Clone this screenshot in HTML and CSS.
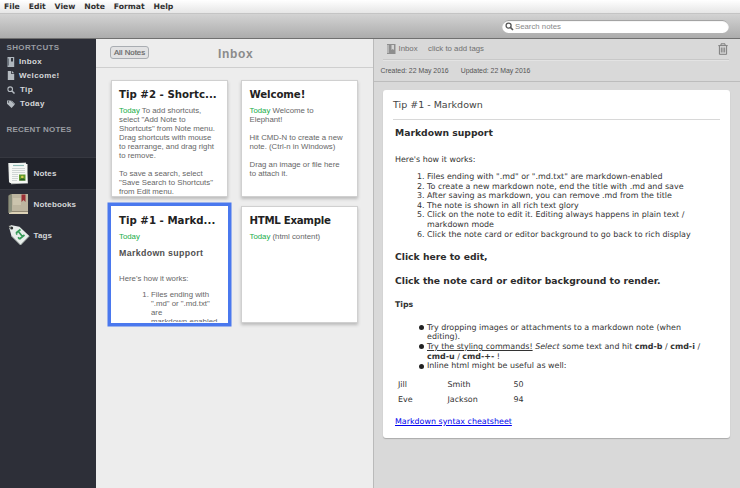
FILE: index.html
```html
<!DOCTYPE html>
<html lang="en">
<head>
<meta charset="utf-8">
<title>Elephant</title>
<link rel="stylesheet" href="styles.css">
</head>
<body>
<nav class="menubar"><span>File</span><span>Edit</span><span>View</span><span>Note</span><span>Format</span><span>Help</span></nav>
<header class="toolbar">
  <div class="search">
    <svg width="9" height="9" viewBox="0 0 9 9"><circle cx="3.6" cy="3.6" r="2.5" fill="none" stroke="#555" stroke-width="1.3"/><path d="M5.4 5.4 8 8" stroke="#555" stroke-width="1.6"/></svg>
    <span>Search notes</span>
  </div>
</header>
<main class="panes">
  <aside class="sidebar">
    <h2>SHORTCUTS</h2>
    <ul class="shortcuts">
      <li><svg width="8" height="10" viewBox="0 0 8 10"><path d="M.5 0h6.7v10H.5z" fill="#aeb6bd"/><path d="M.5 1.5h1.3v7H.5z" fill="#5d656e"/><path d="M4 1h2v4L5 4 4 5z" fill="#30343c"/></svg><span>Inbox</span></li>
      <li><svg width="8" height="9" viewBox="0 0 8 9"><path d="M.8 0h3.4v3h3v6H.8z" fill="#b5bbc1"/><path d="M5 0l2.2 2.3H5z" fill="#b5bbc1"/></svg><span>Welcome!</span></li>
      <li class="wide"><svg width="8" height="8" viewBox="0 0 8 8"><circle cx="3.2" cy="3.2" r="2.3" fill="none" stroke="#b5bbc1" stroke-width="1.1"/><path d="M5 5l2.5 2.5" stroke="#b5bbc1" stroke-width="1.5"/></svg><span>Tip</span></li>
      <li class="wide"><svg width="8" height="8" viewBox="0 0 8 8"><path d="M0 .5h3.5l4.3 4L4.6 8 0 3.8z" fill="#b5bbc1"/><path d="M4.6.7 8 4.2" stroke="#8d949b"/><circle cx="1.5" cy="1.9" r=".7" fill="#2d2f38"/></svg><span>Today</span></li>
    </ul>
    <h2 class="recent">RECENT NOTES</h2>
    <ul class="sections">
      <li class="active">
        <svg width="22" height="23" viewBox="0 0 22 23"><path d="M1 1.5 18 .5l2 21-17 .8z" fill="#b9bdbb"/><path d="M.3 1h17.5v19.5H1z" fill="#eef1ee"/><path d="M2 2h17.5v19H2z" fill="#f7f8f5"/><path d="M5 3.5h11" stroke="#8dbab4" stroke-width="1.2"/><path d="M4 6.5h13M4 8.5h13M4 10.5h13M4 12.5h6M4 14.5h6M4 16.5h6M4 18.500h5" stroke="#c5cbcb" stroke-width=".8"/><path d="M11 12.500h6.500v6H11z" fill="#5f982c"/><circle cx="14.300" cy="15" r="1.300" fill="#d5ce51"/><path d="M11 18.500l2-2h3l1.500 2z" fill="#285f25"/></svg>
        <span>Notes</span></li>
      <li>
        <svg width="22" height="22" viewBox="0 0 22 22"><path d="M.5 3 2 1h18v19H.5z" fill="#655b49"/><path d="M1 19h19v2H1z" fill="#ddd3b8"/><path d="M3.500 1H20v17.500H3.500z" fill="#bcb59f"/><path d="M.5 2.500 4 1v18l-3.500 1z" fill="#8b907d"/><path d="M5 5h8v7H5z" fill="#cbc4ad"/><path d="M13.500 1.500h4V9l-2-2-2 2z" fill="#9b3036"/></svg>
        <span>Notebooks</span></li>
      <li>
        <svg width="22" height="22" viewBox="0 0 22 22"><path d="M.7 2 2.500 1l9 1.800L21.300 12 12.500 21 3.500 12z" fill="#e8edeb"/><path d="M3.500 12l9 9 8.800-9" fill="none" stroke="#a8b2ac"/><circle cx="3.700" cy="4" r="1.500" fill="#2b302f"/><path d="M2 4C0 2 1 1 3 2" fill="none" stroke="#222" stroke-width=".8"/><path d="m8 9 4.500-3.500M10.200 7.300l4 5M11.500 15l5-4M8 9l1.200 1.500M11.500 15l-1.400-1.700" fill="none" stroke="#359b58" stroke-width="1.700"/></svg>
        <span>Tags</span></li>
    </ul>
  </aside>

  <section class="browser">
    <header class="browser-head"><button>All Notes</button><h1>Inbox</h1></header>
    <div class="cards">
      <article class="card"><h3 class="loose">Tip #2 - Shortc...</h3>
        <p><b>Today</b> To add shortcuts,<br>select "Add Note to<br>Shortcuts" from Note menu.<br>Drag shortcuts with mouse<br>to rearrange, and drag right<br>to remove.<br><br>To save a search, select<br>"Save Search to Shortcuts"<br>from Edit menu.</p></article>
      <article class="card"><h3>Welcome!</h3>
        <p><b>Today</b> Welcome to<br>Elephant!<br><br>Hit CMD-N to create a new<br>note. (Ctrl-n in Windows)<br><br>Drag an image or file here<br>to attach it.</p></article>
      <article class="card selected"><h3 class="loose">Tip #1 - Markd...</h3>
        <p><b>Today</b></p>
        <h4>Markdown support</h4>
        <p>Here's how it works:</p>
        <ol><li>Files ending with<br>".md" or ".md.txt"<br>are<br>markdown-enabled</li></ol></article>
      <article class="card"><h3 class="tight">HTML Example</h3>
        <p><b>Today</b> (html content)</p></article>
    </div>
  </section>

  <section class="editor">
    <div class="crumbs">
      <svg width="9" height="10" viewBox="0 0 9 10"><path d="M0 0h8.500v10H0z" fill="#8e8e8e"/><path d="M0 1h2v8H0z" fill="#b5b5b5"/><path d="M4.500 1H7v5L5.700 5 4.500 6z" fill="#d4d4d4"/></svg>
      <span class="notebook">Inbox</span><span>click to add tags</span>
      <svg class="trash" width="10" height="12" viewBox="0 0 10 12"><path d="M.3 2.600h9.400M3 2.300V.8h4v1.500M1.400 3v8.300h7.200V3M3.300 4.500v5M5 4.500v5M6.700 4.500v5" fill="none" stroke="#7e7e7e"/></svg>
    </div>
    <div class="dates"><span>Created: 22 May 2016</span><span>Updated: 22 May 2016</span></div>
    <article class="note">
      <h2>Tip #1 - Markdown</h2>
      <h3 class="first">Markdown support</h3>
      <p class="intro">Here's how it works:</p>
      <ol>
        <li>Files ending with ".md" or ".md.txt" are markdown-enabled</li>
        <li>To create a new markdown note, end the title with .md and save</li>
        <li>After saving as markdown, you can remove .md from the title</li>
        <li>The note is shown in all rich text glory</li>
        <li>Click on the note to edit it. Editing always happens in plain text /<br>markdown mode</li>
        <li>Click the note card or editor background to go back to rich display</li>
      </ol>
      <h3>Click here to edit,</h3>
      <h3>Click the note card or editor background to render.</h3>
      <h4>Tips</h4>
      <ul>
        <li>Try dropping images or attachments to a markdown note (when<br>editing).</li>
        <li><u>Try the styling commands!</u> <i>Select</i> some text and hit <b>cmd-b</b> / <b>cmd-i</b> /<br><b>cmd-u</b> / <b>cmd-+-</b> !</li>
        <li>Inline html might be useful as well:</li>
      </ul>
      <table>
        <tr><td>Jill</td><td>Smith</td><td>50</td></tr>
        <tr><td>Eve</td><td>Jackson</td><td>94</td></tr>
      </table>
      <a href="#">Markdown syntax cheatsheet</a>
    </article>
  </section>
</main>
</body>
</html>
```
FILE: styles.css
```css
* { box-sizing: border-box; margin: 0; padding: 0; }
body {
  width: 740px; height: 488px; overflow: hidden;
  display: flex; flex-direction: column;
  font: 7.8px/9.6px "DejaVu Sans", sans-serif; color: #333;
}
ul, ol { list-style: none; }
svg { flex: none; display: block; }

.menubar {
  height: 13px; padding-left: 4px; display: flex; gap: 8.9px;
  font-weight: bold; font-size: 7.7px; line-height: 13px; color: #303030;
  background: linear-gradient(#fff, #e6e6e6);
}
.toolbar {
  height: 26px; display: flex; justify-content: flex-end;
  padding: 6px 11px 0 0;
  background: linear-gradient(#d3d3d3, #acacac);
  border-top: 1px solid #c4c4c4; border-bottom: 1px solid #707070;
}
.search {
  width: 227px; height: 13px; padding: 0 3px; border-radius: 7px;
  display: flex; align-items: center; gap: 1px;
  background: #fff; box-shadow: inset 0 1px 1px #999;
  font: 7.8px "Liberation Sans", sans-serif; color: #888;
}
.panes { flex: 1; display: flex; min-height: 0; }

.sidebar {
  width: 96px; background: #2d2f38;
  font: bold 8px/14px "Liberation Sans", sans-serif; letter-spacing: .35px; color: #d6d8da;
}
.sidebar h2 { font-size: 8px; line-height: 10px; padding: 4px 0 0 6.5px; color: #9a9da3; }
.shortcuts { padding: 1.5px 0 0 7px; }
.shortcuts li { height: 14.2px; display: flex; align-items: center; gap: 4px; }
.shortcuts .wide { gap: 5px; }
.sidebar .recent { padding-top: 13.7px; letter-spacing: .2px; }
.sections { margin-top: 23px; letter-spacing: .15px; }
.sections li { height: 31px; padding-left: 8px; display: flex; align-items: center; gap: 3.5px; }
.sections span { padding-top: 1px; }
.sections .active { background: #22242c; box-shadow: 0 -1px #363840, 0 1px #363840; }

.browser { width: 277px; background: #ededed; }
.browser-head { height: 29px; display: flex; align-items: center; padding-left: 14px; border-bottom: 1px solid #cfcfcf; }
.browser-head button {
  width: 39px; height: 13px; margin-top: -1px; border: 1px solid #a9adb2; border-radius: 3px; background: #e2e2e3;
  font: 7.8px/10px "Liberation Sans", sans-serif; color: #666; -webkit-text-stroke: .2px #666;
}
.browser-head h1 { margin: 2px 0 0 69px; font: bold 12px "Liberation Sans", sans-serif; letter-spacing: .7px; color: #8b8b8b; }
.cards { display: grid; grid-template-columns: 117px 117px; grid-auto-rows: 117px; gap: 8.5px 13.5px; padding: 12px 0 0 14.5px; }
.card {
  background: #fff; border: 1px solid #d0d0d0; padding: 8px 0 0 7.5px; overflow: hidden;
  font: 7.8px/9px "Liberation Sans", sans-serif; color: #666;
  box-shadow: 0 2px 3px #bbb; white-space: nowrap;
}
.card h3 { font: bold 10.2px/12px "DejaVu Sans", sans-serif; letter-spacing: -.1px; color: #222; margin-bottom: 5px; }
.card .loose { letter-spacing: .02px; }
.card .tight { letter-spacing: -.28px; }
.card p b { font-weight: normal; color: #17ad49; }
.card.selected { border-color: #fff; box-shadow: 0 0 0 3.5px #4a78ee; }
.card h4 { font: bold 8.8px/10px "Liberation Sans", sans-serif; letter-spacing: .35px; color: #505050; margin: 7px 0 16px; }
.card ol { list-style: decimal; padding: 7px 0 0 32px; }

.editor { flex: 1; background: #d9d9d9; border-left: 1px solid #bababa; padding-left: 9px; }
.crumbs {
  height: 21px; width: 346px; padding: 0 1px 1px 3.5px; display: flex; align-items: center;
  font: 7.8px "Liberation Sans", sans-serif; color: #707070;
  border-bottom: 1px solid #c8c8c8; box-shadow: 0 1px #e3e3e3;
}
.crumbs .notebook { margin: 0 10.5px 0 3px; }
.crumbs .trash { margin-left: auto; }
.dates {
  height: 22px; margin-left: -9px; padding: 6px 0 0 6.5px; display: flex; gap: 12px;
  font: 6.9px/10px "Liberation Sans", sans-serif; color: #555; border-bottom: 1px solid #bdbdbd;
}
.note { width: 347px; height: 348px; margin-top: 8px; padding: 9px 10px 0 12px; background: #fff; border-radius: 3px; box-shadow: 0 1px 1px #aaa; font-size: 7.95px; }
.note h2 { font: 9.5px/12px "DejaVu Sans", sans-serif; margin: 0 0 0 -2px; padding-bottom: 8px; border-bottom: 1px solid #d8d8d8; color: #444; }
.note h3 { font-size: 9.22px; line-height: 12px; margin-bottom: 12px; color: #2c2c2c; }
.note .first { margin: 7px 0 15.5px; }
.note .intro { margin-bottom: 8px; }
.note ol { list-style: decimal; padding-left: 32px; margin-bottom: 12px; }
.note h4 { font-size: 7.8px; line-height: 10px; margin: 13px 0 12.5px; }
.note ul { list-style: none; padding-left: 32px; }
.note ul li { position: relative; }
.note ul li::before { content: ""; position: absolute; left: -8px; top: 2.5px; width: 5px; height: 5px; border-radius: 50%; background: #222; }
.note table { border-collapse: collapse; margin: 6.5px 0 10px 3px; }
.note td { height: 14.8px; width: 49.5px; vertical-align: middle; }
.note td:nth-child(2) { width: 66px; }
.note a { display: block; color: #00e; }
```
